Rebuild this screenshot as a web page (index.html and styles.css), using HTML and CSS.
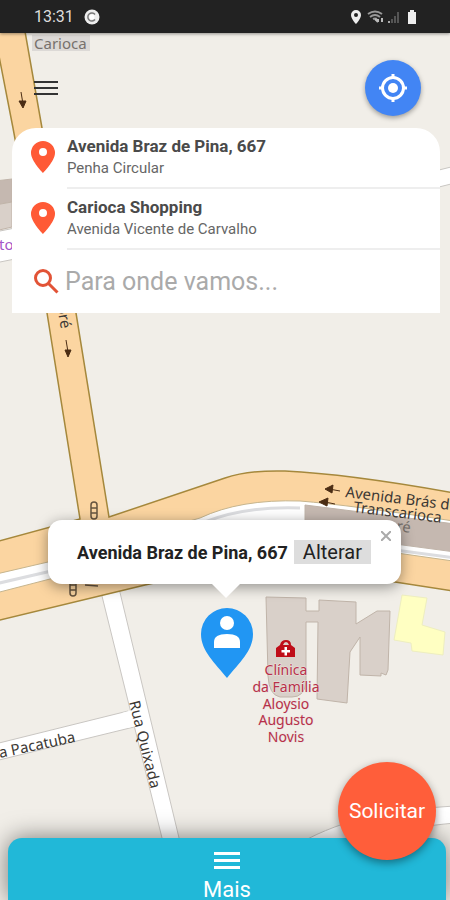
FILE: index.html
```
<!DOCTYPE html>
<html lang="pt-BR">
<head>
    <meta charset="UTF-8">
    <meta name="viewport" content="width=device-width, initial-scale=1.0">
    <title>Solicitar corrida</title>
    <link rel="stylesheet" href="styles.css">
</head>
<body>
    <div class="app">
        <svg class="map" viewBox="0 0 450 900" preserveAspectRatio="xMidYMin slice" aria-label="Mapa">
            <!-- buildings and side streets on the edges -->
            <path class="building dark" d="M-5 181 12 179V202L-5 205Z"/>
            <path class="building" d="M-5 205 12 202V227L-5 231Z"/>
            <path class="street" d="M-5 232 20 227V258L-5 263Z"/>
            <text class="metro" x="-10" y="250">oto</text>
            <path class="street" d="M435 171 455 166V183L435 188Z"/>
            <path class="street" d="M300 843C345 818 390 810 455 806V823C400 828 360 838 340 850Z"/>

            <!-- residential streets -->
            <path class="street" d="M-5 744 128 711 134 727-5 761Z"/>
            <path class="street" d="M99 584 117 580 180 842H163Z"/>
            <path class="street-fill" d="M122 713 132 710 137 726 127 728Z"/>

            <!-- avenue -->
            <path class="avenue" d="M-8 20H23L42 128 76 313 109 517 225 478Q248 470 285 471 350 474 460 494V592L395 582 310 572Q230 564 145 585L-8 622V543L80 519 47 313 13 128Z"/>
            <path class="lane" d="M-8 575 48 562 200 518Q240 499 300 501 350 505 460 522V562L390 552 300 542Q240 535 180 548L50 579-8 594Z"/>
            <path class="lane-line" d="M-5 584 60 569M205 522Q245 506 300 508M395 550 455 558"/>
            <path class="building dark" d="M305 505 400 517 455 524V552L305 532Z"/>

            <!-- clinic and neighbours -->
            <path class="building" d="M266 597 306 598V611H319V600L356 602V624L377 611H390L388 670 386 675 381 673V676L360 675V637L350 652 347 703 317 699 318 622H306V683Q304 697 292 697H280Q269 695 268 676Z"/>
            <path class="house" d="M402 595 427 598 422 625 445 632 443 655 412 651 411 643 394 640Z"/>
            <g class="clinic">
                <path d="M276 657V648L280 645Q281 640 286 640T291 645L295 648V657ZM283 645H289Q288 642 286 642T283 645Z" fill-rule="evenodd"/>
                <path d="M284.500 647H287V650H290V652.500H287V655.500H284.500V652.500H281.500V650H284.500Z" fill="#fff"/>
                <text x="286" y="675">Clínica</text>
                <text x="286" y="692">da Família</text>
                <text x="286" y="709">Aloysio</text>
                <text x="286" y="725">Augusto</text>
                <text x="286" y="742">Novis</text>
            </g>

            <!-- one-way arrows -->
            <g class="arrow">
                <path d="M21 92 23 104M19 101 23 108 26 101ZM66 340 68 352M65 350 68 357 71 350Z"/>
                <path d="M340 491 329 489M333 485 325 489 332 493ZM335 504 325 502M328 498 319 502 327 506Z"/>
            </g>
            <!-- traffic lights -->
            <g class="signal">
                <rect x="91" y="502" width="6" height="17" rx="3"/>
                <path d="M91 508H97M91 513H97"/>
                <rect x="70" y="580" width="6" height="16" rx="3"/>
                <path d="M70 585H76M70 590H76"/>
                <path d="M85 585 98 586"/>
            </g>

            <!-- street names -->
            <rect x="32" y="35" width="58" height="16" fill="#dcd9d6"/>
            <text class="place" x="34" y="49">Carioca</text>
            <text class="name" transform="translate(57 306) rotate(80)">oré</text>
            <text class="name" transform="translate(345 497) rotate(7)">Avenida Brás de Pina</text>
            <text class="place" transform="translate(396 531) rotate(7)">ré</text>
            <text class="name" transform="translate(353 512) rotate(7)">Transcarioca</text>
            <text class="name" transform="translate(0 758) rotate(-12)">a Pacatuba</text>
            <text class="name" transform="translate(129 702) rotate(76)">Rua Quixada</text>
        </svg>

        <header class="status">
            <time>13:31</time>
            <svg class="status-app" viewBox="0 0 16 16" width="16" height="16">
                <circle cx="8" cy="8" r="7.500" fill="#eee"/>
                <path d="M11 5.500A4 4 0 1 0 11 10.500" fill="none" stroke="#777" stroke-width="1.500"/>
                <circle cx="8" cy="8" r="2.500" fill="#fff"/>
            </svg>
            <svg class="status-icons" viewBox="0 0 70 16" width="70" height="16">
                <path d="M6 1A5 5 0 0 0 1 6C1 10 6 15 6 15S11 10 11 6A5 5 0 0 0 6 1ZM6 4A2 2 0 1 1 6 8 2 2 0 0 1 6 4Z" fill="#eee" fill-rule="evenodd"/>
                <path d="M18 5Q25 0 32 5M20 8Q25 4 30 8M23 10Q25 9 27 10" fill="none" stroke="#999" stroke-width="2"/>
                <path d="M25 10 28 13M28 10V13M32 9V13" stroke="#bbb" stroke-width="2"/>
                <path d="M38 12H40V14H38Z" fill="#aaa"/>
                <path d="M41 10H43V14H41ZM44 7H46V14H44ZM47 3H49V14H47Z" fill="#555"/>
                <path d="M58 3H60V1H64V3H66V15H58Z" fill="#eee"/>
            </svg>
        </header>

        <main class="content">
            <div class="toolbar">
                <button class="menu" aria-label="Menu"><span></span><span></span><span></span></button>
                <button class="locate" aria-label="Minha localização">
                    <svg viewBox="0 0 28 28" width="28" height="28">
                        <circle cx="14" cy="14" r="10.500" fill="none" stroke="#fff" stroke-width="3"/>
                        <circle cx="14" cy="14" r="5" fill="#fff"/>
                        <path d="M14 0V4M14 24V28M0 14H4M24 14H28" stroke="#fff" stroke-width="3"/>
                    </svg>
                </button>
            </div>

            <section class="places">
                <div class="place-row">
                    <svg class="marker" viewBox="0 0 24 32" width="24" height="32"><path d="M12 0A12 12 0 0 0 0 12C0 20 12 32 12 32S24 20 24 12A12 12 0 0 0 12 0ZM12 7A4 4 0 1 1 12 15 4 4 0 0 1 12 7Z"/></svg>
                    <div class="place-text">
                        <strong>Avenida Braz de Pina, 667</strong>
                        <span>Penha Circular</span>
                    </div>
                </div>
                <div class="place-row">
                    <svg class="marker" viewBox="0 0 24 32" width="24" height="32"><path d="M12 0A12 12 0 0 0 0 12C0 20 12 32 12 32S24 20 24 12A12 12 0 0 0 12 0ZM12 7A4 4 0 1 1 12 15 4 4 0 0 1 12 7Z"/></svg>
                    <div class="place-text">
                        <strong>Carioca Shopping</strong>
                        <span>Avenida Vicente de Carvalho</span>
                    </div>
                </div>
                <label class="search">
                    <svg viewBox="0 0 25 25" width="25" height="25"><circle cx="9" cy="9" r="7.500"/><path d="M14.500 14.500 23.500 23.500"/></svg>
                    <input type="text" placeholder="Para onde vamos..." aria-label="Para onde vamos">
                </label>
            </section>
        </main>

        <div class="popup">
            <strong>Avenida Braz de Pina, 667</strong>
            <button class="change">Alterar</button>
            <button class="close" aria-label="Fechar"><svg viewBox="0 0 10 10" width="10" height="10"><path d="M0 0 10 10M10 0 0 10"/></svg></button>
        </div>
        <svg class="pin" viewBox="0 0 52 70" width="52" height="70">
            <path d="M26 0A26 26 0 0 0 0 26C0 43 14 55 26 70 38 55 52 43 52 26A26 26 0 0 0 26 0Z" fill="#2196f3"/>
            <circle cx="26" cy="15" r="7" fill="#fff"/>
            <path d="M13 40V34Q13 26 26 26T39 34V40Z" fill="#fff"/>
        </svg>

        <footer class="sheet">
            <button class="more"><span class="bars"><i></i><i></i><i></i></span>Mais</button>
            <button class="request">Solicitar</button>
        </footer>
    </div>
</body>
</html>
```
FILE: styles.css
```
* {
    box-sizing: border-box;
}
body {
    margin: 0;
    font-family: Roboto, "Liberation Sans", sans-serif;
    background-color: #f1eee8;
    color: #444;
}
button {
    padding: 0;
    border: none;
    background: none;
    font-family: inherit;
    cursor: pointer;
}
.app {
    position: relative;
    display: flex;
    flex-direction: column;
    min-height: 100vh;
    overflow: hidden;
}

/* map */
.map {
    position: absolute;
    inset: 0;
    width: 100%;
    height: 100%;
    font-family: "Noto Sans", sans-serif;
    font-size: 15px;
}
.street { fill: #fff; stroke: #c9c6c2; }
.street-fill { fill: #fff; }
.avenue { fill: #fbd5a1; stroke: #a5883c; stroke-width: 1.5; }
.lane { fill: #fff; stroke: #c6b58e; }
.lane-line { fill: none; stroke: #dcdde0; stroke-width: 3; }
.building { fill: #d9d0c9; stroke: #c0b4a9; }
.building.dark { fill: #c5b8b0; }
.house { fill: #ffffc2; stroke: #eeeec0; }
.clinic { fill: #bf0d18; }
.clinic text {
    fill: #b8304a;
    font-size: 14px;
    text-anchor: middle;
    paint-order: stroke;
    stroke: #e9e4de;
    stroke-width: 1;
}
.arrow path { fill: #4b2d14; stroke: #4b2d14; }
.signal { fill: none; stroke: #66543f; stroke-width: 1.5; }
.name { fill: #3c3834; }
.place { fill: #77716c; }
.metro { fill: #a555c8; }

/* status bar */
.status {
    position: relative;
    display: flex;
    align-items: center;
    gap: 10px;
    height: 33px;
    padding: 0 30px 0 34px;
    background-color: #222;
    color: #ddd;
    font-size: 16px;
    box-shadow: 0 1px 3px rgba(0, 0, 0, 0.4);
}
.status-icons {
    margin-left: auto;
}

.content {
    position: relative;
    padding: 0 10px 0 12px;
}
.toolbar {
    display: flex;
    align-items: center;
    justify-content: space-between;
    padding: 27px 19px 12px 22px;
}
.menu {
    display: flex;
    flex-direction: column;
    gap: 4px;
    width: 24px;
}
.menu span {
    height: 2px;
    background-color: #333;
}
.locate {
    display: flex;
    align-items: center;
    justify-content: center;
    width: 56px;
    height: 56px;
    border-radius: 50%;
    background-color: #4285f4;
    box-shadow: 0 2px 5px rgba(0, 0, 0, 0.35);
}

/* suggestions and search box */
.places {
    background-color: #fff;
    border-radius: 24px 24px 0 0;
    overflow: hidden;
}
.place-row {
    display: flex;
    gap: 12px;
    padding-left: 19px;
}
.marker {
    margin-top: 13px;
    fill: #ff5a36;
}
.place-text {
    flex: 1;
    display: flex;
    flex-direction: column;
    height: 61px;
    padding-top: 7px;
    border-bottom: 2px solid #eee;
}
.place-text strong {
    font-size: 17px;
    line-height: 22px;
    font-weight: 700;
    color: #4a4a4a;
}
.place-text span {
    font-size: 15px;
    line-height: 22px;
    color: #666;
}
.search {
    display: flex;
    align-items: center;
    gap: 6px;
    height: 63px;
    padding-left: 22px;
}
.search svg {
    fill: none;
    stroke: #e25336;
    stroke-width: 3;
}
.search input {
    flex: 1;
    min-width: 0;
    padding: 0;
    border: none;
    outline: none;
    font-family: inherit;
    font-size: 25px;
    color: #444;
}
.search input::placeholder {
    color: #aaa;
}

/* address bubble over the map */
.popup {
    position: absolute;
    top: 520px;
    left: calc(50% - 177px);
    display: flex;
    align-items: center;
    gap: 6px;
    width: 353px;
    height: 64px;
    padding-left: 29px;
    background-color: #fff;
    border-radius: 14px;
    box-shadow: 0 3px 14px rgba(0, 0, 0, 0.4);
}
.popup::after {
    content: "";
    position: absolute;
    top: 100%;
    left: 164px;
    border: 14px solid transparent;
    border-top-color: #fff;
    border-bottom: none;
}
.popup strong {
    font-size: 18px;
    font-weight: 700;
    color: #222;
    white-space: nowrap;
}
.change {
    height: 24px;
    padding: 0 9px;
    background-color: #ddd;
    color: #222;
    font-size: 20px;
    line-height: 24px;
}
.close {
    position: absolute;
    top: 11px;
    right: 10px;
    display: flex;
}
.close path {
    stroke: #aaa;
    stroke-width: 2;
}
.pin {
    position: absolute;
    top: 608px;
    left: calc(50% - 24px);
}

/* bottom sheet */
.sheet {
    position: relative;
    margin: auto 4px 0 8px;
    height: 62px;
    background-color: #21b8d8;
    border-radius: 14px 14px 0 0;
    box-shadow: 0 0 24px rgba(0, 0, 0, 0.5);
}
.more {
    display: flex;
    flex-direction: column;
    align-items: center;
    gap: 8px;
    width: 100%;
    padding-top: 14px;
    color: #fff;
    font-size: 22px;
    line-height: 26px;
}
.bars {
    display: flex;
    flex-direction: column;
    gap: 4px;
    width: 26px;
}
.bars i {
    height: 3px;
    background-color: #fff;
}
.request {
    position: absolute;
    right: 10px;
    bottom: 40px;
    width: 98px;
    height: 98px;
    border-radius: 50%;
    background-color: #ff5e3a;
    color: #fff;
    font-size: 21px;
    box-shadow: 0 3px 8px rgba(0, 0, 0, 0.4);
}
```
